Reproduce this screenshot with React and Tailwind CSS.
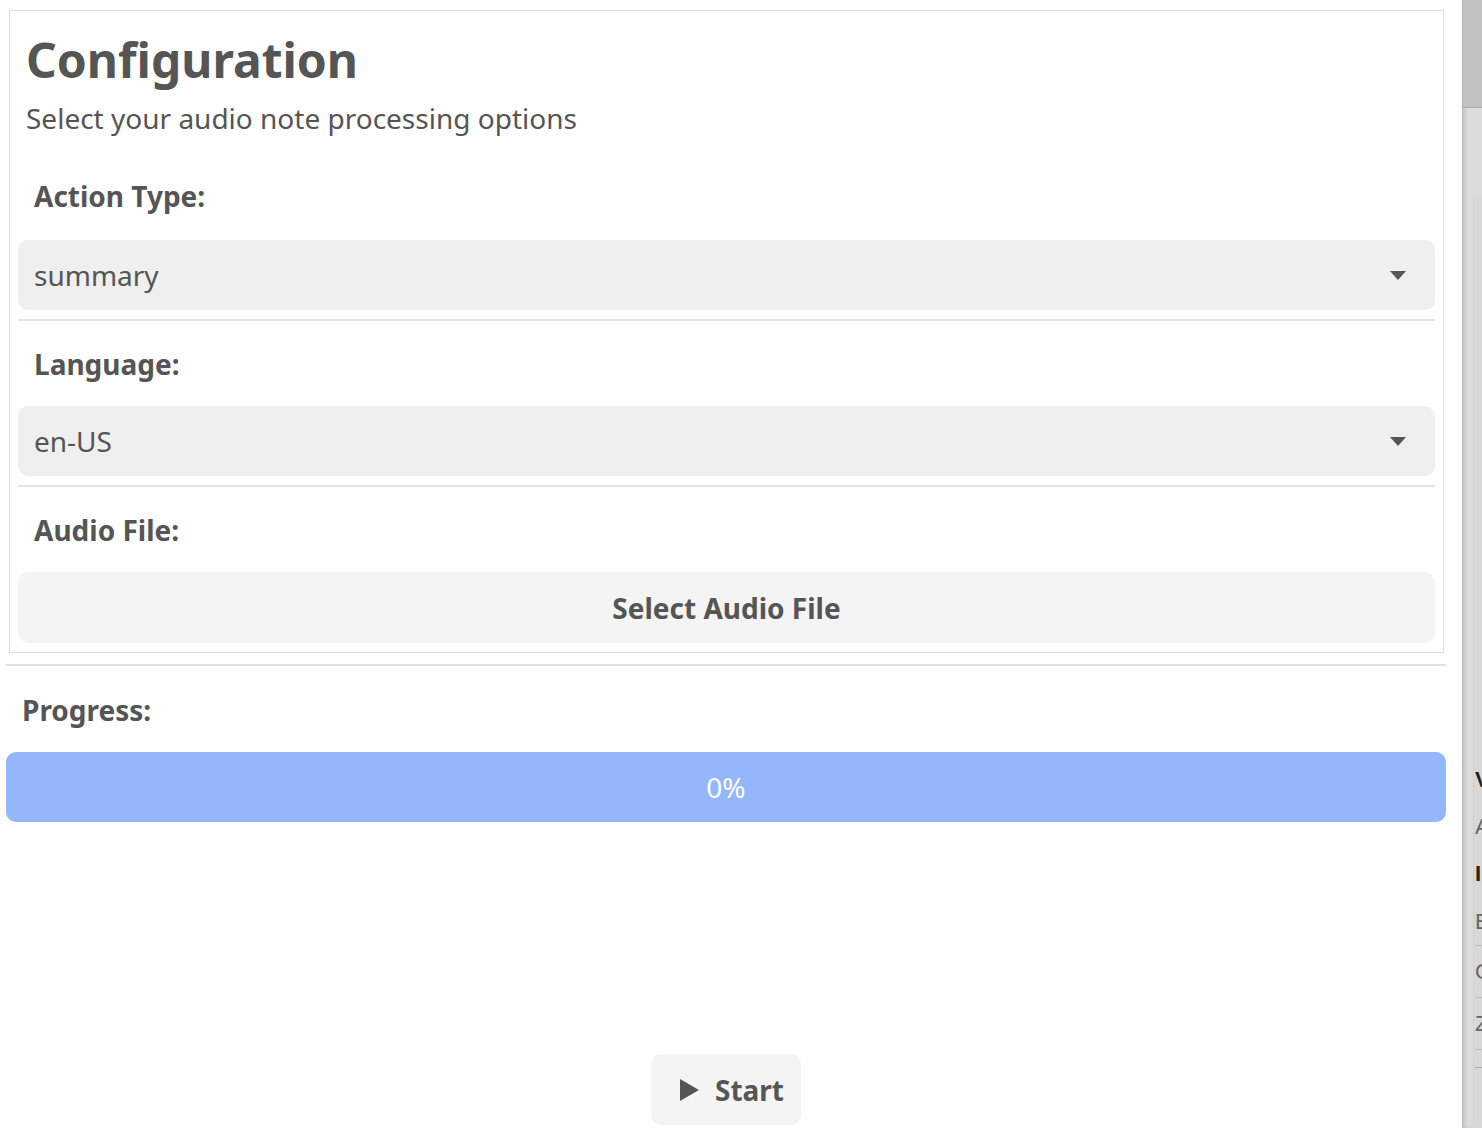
export default function App() {
  const font = { fontFamily: '"Noto Sans", "Open Sans", sans-serif' };
  const Arrow = () => (
    <svg width="16" height="9" viewBox="0 0 16 9" className="shrink-0">
      <path d="M0 0 L16 0 L8 9 Z" fill="#555555" />
    </svg>
  );
  return (
    <div className="flex w-[1482px] h-[1128px] overflow-hidden bg-white text-[#555555]" style={font}>
      <div className="w-[1462px] shrink-0 flex flex-col">
        <div className="ml-[9px] mt-[10px] w-[1435px] h-[643px] border border-[#dddddd] p-2">
          <div className="px-2 pt-[12px]">
            <h1 className="text-[48px] font-bold leading-[58px]">Configuration</h1>
            <p className="text-[28px] leading-[40px] mt-[9px]">Select your audio note processing options</p>
          </div>
          <div className="px-[16px] mt-[38px] text-[28px] font-bold leading-[40px]">Action Type:</div>
          <div className="mt-[24px] h-[70px] rounded-[10px] bg-[#efefef] flex items-center justify-between pl-4 pr-[29px]">
            <span className="text-[28px]">summary</span>
            <Arrow />
          </div>
          <div className="mt-[9px] h-[2px] bg-[#e3e3e3]"></div>
          <div className="px-[16px] mt-[23px] text-[28px] font-bold leading-[40px]">Language:</div>
          <div className="mt-[22px] h-[70px] rounded-[10px] bg-[#efefef] flex items-center justify-between pl-4 pr-[29px]">
            <span className="text-[28px]">en-US</span>
            <Arrow />
          </div>
          <div className="mt-[9px] h-[2px] bg-[#e3e3e3]"></div>
          <div className="px-[16px] mt-[23px] text-[28px] font-bold leading-[40px]">Audio File:</div>
          <div className="mt-[22px] h-[71px] rounded-[10px] bg-[#f4f4f4] flex items-center justify-center">
            <span className="text-[28px] font-bold">Select Audio File</span>
          </div>
        </div>
        <div className="ml-[6px] mt-[11px] w-[1440px] h-[2px] bg-[#e3e3e3]"></div>
        <div className="ml-[6px] w-[1440px]">
          <div className="px-[16px] mt-[24px] text-[28px] font-bold leading-[40px]">Progress:</div>
          <div className="mt-[22px] h-[70px] rounded-[10px] bg-[#94b6fb] flex items-center justify-center">
            <span className="text-[28px] text-white">0%</span>
          </div>
        </div>
        <div className="flex-1"></div>
        <div className="flex justify-center pb-[3px]">
          <button className="w-[150px] h-[71px] rounded-[10px] bg-[#f4f4f4] flex items-center justify-start pl-[29px] gap-[16px] ml-[-10px]">
            <svg width="19" height="22" viewBox="0 0 19 22" className="shrink-0"><path d="M0 0 L19 11 L0 22 Z" fill="#555555" /></svg>
            <span className="text-[28px] font-bold">Start</span>
          </button>
        </div>
      </div>
      <div className="w-[20px] shrink-0 h-full flex flex-col bg-[#dcdcdc] border-l border-[#b5b5b5] shadow-[inset_3px_0_3px_rgba(0,0,0,0.08)] overflow-hidden">
        <div className="h-[108px] bg-[#c1c1c1] border-b border-[#adadad]"></div>
        <div className="flex-1 flex flex-col pl-[10px] pt-[89px]">
          <div className="flex-1 bg-[#d8d8d8] border-l border-[#d0d0d0] pt-[568px] pl-[1px] text-[22px] leading-[30px] whitespace-nowrap" style={{ fontFamily: '"Liberation Sans", sans-serif' }}>
            <div className="font-bold text-[#222] h-[47px]">Vi</div>
            <div className="text-[#666] h-[47px]">Au</div>
            <div className="font-bold text-[#222] h-[48px]">In</div>
            <div className="text-[#666] h-[38px]">En</div>
            <div className="border-t border-[#bbb] h-[52px] pt-[11px] text-[#666]">Ge</div>
            <div className="border-t border-[#bbb] h-[52px] pt-[11px] text-[#666]">Zh</div>
            <div className="border-t border-[#bbb] h-[18px]"></div>
            <div className="border-t border-[#aaa]"></div>
          </div>
        </div>
      </div>
    </div>
  );
}
